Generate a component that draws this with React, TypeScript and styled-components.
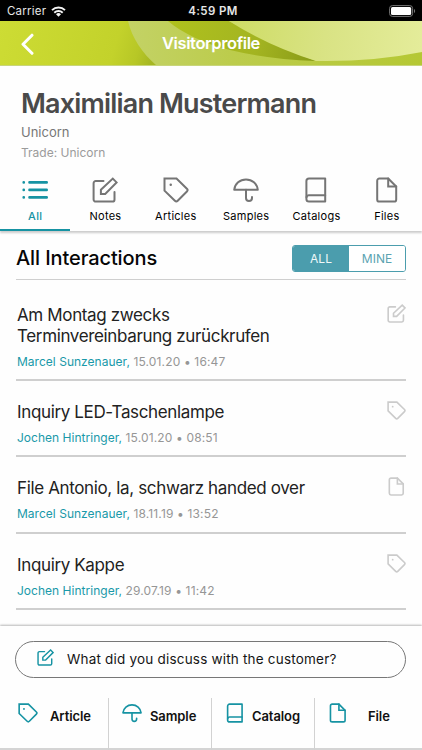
import React from "react";
import styled, { createGlobalStyle } from "styled-components";

const teal = "#1693a3";

const GlobalStyle = createGlobalStyle`
  *, *::before, *::after { box-sizing: border-box; }
  body {
    margin: 0;
    background: #fff;
    font-family: Inter, "Liberation Sans", sans-serif;
    color: #111;
  }
  button { font: inherit; color: inherit; background: none; border: 0; padding: 0; }
  h1, h2, h3, p { margin: 0; }
`;

const Screen = styled.div`
  width: 422px;
  height: 750px;
  display: flex;
  flex-direction: column;
  overflow: hidden;
  background: #fefefe;
`;

const StatusBar = styled.div`
  height: 21px;
  flex: none;
  display: grid;
  grid-template-columns: 1fr auto 1fr;
  align-items: center;
  padding: 1px 6px 0 7px;
  background: #000;
  color: #e6e6e6;
  font-size: 11.5px;
  letter-spacing: 0.22px;
`;

const Carrier = styled.div`
  display: flex;
  align-items: center;
  gap: 5px;
`;

const Clock = styled.div`
  padding-left: 3px;
  font-weight: 600;
  letter-spacing: 0.4px;
`;

const Battery = styled.svg`
  justify-self: end;
  display: block;
`;

const Header = styled.header`
  position: relative;
  height: 45px;
  flex: none;
  display: grid;
  grid-template-columns: 60px 1fr 60px;
  align-items: center;
  background: #c5d52c;
`;

const HeaderArt = styled.svg`
  position: absolute;
  inset: 0;
  width: 100%;
  height: 100%;
`;

const BackButton = styled.button`
  position: relative;
  height: 22px;
  padding-left: 20px;
  text-align: left;
  svg { display: block; }
`;

const HeaderTitle = styled.div`
  position: relative;
  padding-bottom: 1px;
  text-align: center;
  color: #fff;
  font-size: 16.5px;
  font-weight: 600;
  letter-spacing: -0.4px;
`;

const Profile = styled.section`
  height: 105px;
  flex: none;
  padding: 21px 21px 0;
`;

const Name = styled.h1`
  font-size: 27px;
  line-height: 34px;
  font-weight: 600;
  letter-spacing: -0.83px;
  color: #4a4a4a;
  white-space: nowrap;
`;

const Company = styled.p`
  margin-top: 2px;
  font-size: 13px;
  line-height: 18px;
  color: #777;
`;

const Trade = styled.p`
  margin-top: 3px;
  font-size: 12px;
  line-height: 18px;
  color: #9b9b9b;
`;

const Tabs = styled.nav`
  height: 60px;
  flex: none;
  display: grid;
  grid-template-columns: repeat(6, 1fr);
  box-shadow: 0 2px 2px rgba(0, 0, 0, 0.2);
`;

const Tab = styled.button<{ $active?: boolean }>`
  display: flex;
  flex-direction: column;
  align-items: center;
  padding-top: 6px;
  border-bottom: 2px solid ${(p) => (p.$active ? teal : "transparent")};
  color: ${(p) => (p.$active ? teal : "#757575")};
`;

const TabLabel = styled.span<{ $active?: boolean }>`
  margin-top: 5px;
  font-size: 11px;
  line-height: 16px;
  font-weight: ${(p) => (p.$active ? 500 : 400)};
  letter-spacing: 0.26px;
  color: ${(p) => (p.$active ? teal : "#000")};
`;

const Feed = styled.main`
  flex: 1;
  min-height: 0;
  padding: 0 16px;
`;

const FeedHeader = styled.div`
  height: 49px;
  display: flex;
  align-items: center;
  justify-content: space-between;
  padding-top: 6px;
  border-bottom: 1px solid #cfcfcf;
`;

const FeedTitle = styled.h2`
  font-size: 20px;
  line-height: 26px;
  font-weight: 500;
  letter-spacing: -0.1px;
  color: #060606;
`;

const Segments = styled.div`
  width: 114px;
  height: 27px;
  display: grid;
  grid-template-columns: 1fr 1fr;
  border: 1px solid #4b9dad;
  border-radius: 3px;
  overflow: hidden;
`;

const Segment = styled.button<{ $on?: boolean }>`
  font-size: 12px;
  background: ${(p) => (p.$on ? "#4b9dad" : "#fff")};
  color: ${(p) => (p.$on ? "#f1f8f9" : "#5ba3b1")};
`;

const Entry = styled.article<{ $height: number; $top: number }>`
  height: ${(p) => p.$height}px;
  display: flex;
  justify-content: space-between;
  padding: ${(p) => p.$top}px 0.5px 0 1px;
  border-bottom: 2px solid #cfcfcf;
`;

const EntryTitle = styled.h3`
  font-size: 17px;
  line-height: 21px;
  font-weight: 400;
  letter-spacing: -0.36px;
  color: #222;
  white-space: pre-line;
`;

const EntryMeta = styled.p`
  margin-top: 7px;
  font-size: 12px;
  line-height: 16px;
  letter-spacing: 0.15px;
  color: #969696;
`;

const Author = styled.span`
  letter-spacing: 0.02px;
  color: #1999a9;
`;

const EntryIcon = styled.div`
  margin-top: -1px;
  color: #cbcbcb;
`;

const Composer = styled.footer`
  height: 124px;
  flex: none;
  padding: 15px 0 0;
  border-bottom: 2px solid #d4d4d4;
  box-shadow: 0 -1px 2px rgba(0, 0, 0, 0.28);
`;

const NoteInput = styled.button`
  width: 391px;
  height: 37px;
  margin: 0 15px;
  display: flex;
  align-items: center;
  gap: 13px;
  padding: 0 0 1px 21px;
  border: 1px solid #777;
  border-radius: 19px;
  color: ${teal};
  svg { margin-bottom: 3px; }
`;

const NotePrompt = styled.span`
  font-size: 13.5px;
  letter-spacing: 0.2px;
  color: #151515;
`;

const Actions = styled.div`
  height: 52px;
  margin-top: 20px;
  display: grid;
  grid-template-columns: 108px 103px 103px 108px;
`;

const Action = styled.button<{ $pad: number; $gap: number }>`
  display: flex;
  align-items: flex-start;
  gap: ${(p) => p.$gap}px;
  padding: 5px 0 0 ${(p) => p.$pad}px;
  color: ${teal};
  & + & { border-left: 1px solid #d2d2d2; }
`;

const ActionLabel = styled.span`
  margin-top: 4px;
  font-size: 13px;
  line-height: 18px;
  font-weight: 600;
  letter-spacing: -0.1px;
  color: #111;
`;

const Glyph = styled.svg`
  display: block;
  flex: none;
  fill: none;
  stroke: currentColor;
  stroke-linecap: round;
  stroke-linejoin: round;
`;

type IconName = "list" | "note" | "tag" | "umbrella" | "book" | "file";

const shapes: Record<IconName, React.ReactNode> = {
  list: (
    <>
      <path d="M7.5 5.4h17.2M7.5 12.9h17.2M7.5 20.4h17.2" strokeWidth="2.6" />
      <path d="M1.7 5.4h.1M1.7 12.9h.1M1.7 20.4h.1" strokeWidth="2.6" />
    </>
  ),
  note: (
    <>
      <path d="M11.5 4H3.8a2.2 2.2 0 0 0-2.2 2.2v16.2a2.2 2.2 0 0 0 2.2 2.2h16.5a2.2 2.2 0 0 0 2.2-2.2v-7.3" />
      <path d="M20.8 1.6 24.6 5.4 13.2 17H8.9v-4.3Z" strokeLinejoin="miter" />
    </>
  ),
  tag: (
    <>
      <path d="M1.5 1.5h12l10.4 10.2q1.4 1.4 0 2.8l-9.2 9.2q-1.4 1.4-2.8 0L1.5 13.6Z" strokeLinejoin="miter" />
      <path d="M7.7 7.7h.1" strokeWidth="2.4" />
    </>
  ),
  umbrella: (
    <>
      <path d="M1.2 12.8C1.8 6.5 7 2.4 13 2.4s11.2 4.1 11.8 10.4Z" />
      <path d="M13 12.8v8.1a3 3 0 0 0 6 0v-1" />
    </>
  ),
  book: (
    <>
      <path d="M6 1.5h16.2v23.1H6A2.6 2.6 0 0 1 3.4 22V4.1A2.6 2.6 0 0 1 6 1.5Z" />
      <path d="M3.5 20.2a2.5 2.5 0 0 1 2.5-2h16.2" />
    </>
  ),
  file: (
    <>
      <path d="M14.2 1.5H5.4A2.2 2.2 0 0 0 3.2 3.7v18.7a2.2 2.2 0 0 0 2.2 2.2H20a2.2 2.2 0 0 0 2.2-2.2V9.5Z" />
      <path d="M14.2 1.5v8h8" strokeLinejoin="miter" />
    </>
  ),
};

function Icon({ name, size = 26, weight = 2 }: { name: IconName; size?: number; weight?: number }) {
  return (
    <Glyph width={size} height={size} viewBox="0 0 26 26" strokeWidth={weight}>
      {shapes[name]}
    </Glyph>
  );
}

const tabs: { icon: IconName; label: string }[] = [
  { icon: "list", label: "All" },
  { icon: "note", label: "Notes" },
  { icon: "tag", label: "Articles" },
  { icon: "umbrella", label: "Samples" },
  { icon: "book", label: "Catalogs" },
  { icon: "file", label: "Files" },
];

const entries: { title: string; author: string; when: string; icon: IconName; height: number; top: number }[] = [
  { title: "Am Montag zwecks\nTerminvereinbarung zurückrufen", author: "Marcel Sunzenauer,", when: "15.01.20 • 16:47", icon: "note", height: 101, top: 25 },
  { title: "Inquiry LED-Taschenlampe", author: "Jochen Hintringer,", when: "15.01.20 • 08:51", icon: "tag", height: 76, top: 21 },
  { title: "File Antonio, la, schwarz handed over", author: "Marcel Sunzenauer,", when: "18.11.19 • 13:52", icon: "file", height: 77, top: 21 },
  { title: "Inquiry Kappe", author: "Jochen Hintringer,", when: "29.07.19 • 11:42", icon: "tag", height: 76, top: 21 },
];

const actions: { icon: IconName; label: string; pad: number; gap: number }[] = [
  { icon: "tag", label: "Article", pad: 18, gap: 12 },
  { icon: "umbrella", label: "Sample", pad: 13, gap: 8 },
  { icon: "book", label: "Catalog", pad: 13, gap: 7 },
  { icon: "file", label: "File", pad: 13, gap: 20 },
];

export default function App() {
  return (
    <>
      <GlobalStyle />
      <Screen>
        <StatusBar>
          <Carrier>
            Carrier
            <svg width="15" height="11" viewBox="0 0 15 11" fill="none" stroke="#f4f4f4" strokeWidth="1.9">
              <path d="M1 4.2a9.2 9.2 0 0 1 13 0M3.3 6.7a6 6 0 0 1 8.4 0" />
              <path d="M7.5 10.7 5 8.3a3.6 3.6 0 0 1 5 0Z" fill="#f4f4f4" stroke="none" />
            </svg>
          </Carrier>
          <Clock>4:59 PM</Clock>
          <Battery width="27" height="12" viewBox="0 0 27 12">
            <rect x="0.6" y="0.6" width="23" height="10.8" rx="2.8" fill="none" stroke="#777" />
            <rect x="2" y="2" width="20.2" height="8" rx="1.5" fill="#fff" />
            <path d="M25 4v4c1.5-.5 1.5-3.5 0-4Z" fill="#777" />
          </Battery>
        </StatusBar>

        <Header>
          <HeaderArt viewBox="0 0 422 45" preserveAspectRatio="none">
            <defs>
              <linearGradient id="base" x1="0" y1="0" x2="150" y2="45" gradientUnits="userSpaceOnUse">
                <stop offset="0" stopColor="#cddc34" />
                <stop offset="0.75" stopColor="#c3d22b" />
                <stop offset="0.9" stopColor="#b7c726" />
                <stop offset="1" stopColor="#a6b722" />
              </linearGradient>
              <linearGradient id="band" x1="130" y1="0" x2="422" y2="0" gradientUnits="userSpaceOnUse">
                <stop offset="0" stopColor="#c3d265" />
                <stop offset="0.35" stopColor="#bccc4c" />
                <stop offset="1" stopColor="#b5c834" />
              </linearGradient>
              <linearGradient id="leaf" x1="170" y1="0" x2="315" y2="40" gradientUnits="userSpaceOnUse">
                <stop offset="0" stopColor="#afc11d" />
                <stop offset="0.6" stopColor="#a3b421" />
                <stop offset="1" stopColor="#899b17" />
              </linearGradient>
              <linearGradient id="light" x1="230" y1="0" x2="422" y2="20" gradientUnits="userSpaceOnUse">
                <stop offset="0" stopColor="#cedc65" />
                <stop offset="0.5" stopColor="#d9e384" />
                <stop offset="1" stopColor="#e4ec9a" />
              </linearGradient>
            </defs>
            <path d="M0 0h422v45H0Z" fill="url(#base)" />
            <path d="M128 0C132 17 142 32 157 45H422V0Z" fill="url(#band)" />
            <path d="M168 0C182 12 205 23 230 29Q267 38 316 40Q268 22 229 0Z" fill="url(#leaf)" />
            <path d="M229 0Q268 25 316 40Q372 41 422 31V0Z" fill="url(#light)" />
            <path d="M0 44h422v1H0Z" fill="#c8d57b" />
          </HeaderArt>
          <BackButton aria-label="Back">
            <svg width="16" height="22" viewBox="0 0 16 22" fill="none" stroke="#fff" strokeWidth="3" strokeLinecap="round" strokeLinejoin="round">
              <path d="M12 2.2 3 11.3l9 9" />
            </svg>
          </BackButton>
          <HeaderTitle>Visitorprofile</HeaderTitle>
        </Header>

        <Profile>
          <Name>Maximilian Mustermann</Name>
          <Company>Unicorn</Company>
          <Trade>Trade: Unicorn</Trade>
        </Profile>

        <Tabs>
          {tabs.map((tab, i) => (
            <Tab key={tab.label} $active={i === 0}>
              <Icon name={tab.icon} />
              <TabLabel $active={i === 0}>{tab.label}</TabLabel>
            </Tab>
          ))}
        </Tabs>

        <Feed>
          <FeedHeader>
            <FeedTitle>All Interactions</FeedTitle>
            <Segments>
              <Segment $on>ALL</Segment>
              <Segment>MINE</Segment>
            </Segments>
          </FeedHeader>
          {entries.map((entry) => (
            <Entry key={entry.title} $height={entry.height} $top={entry.top}>
              <div>
                <EntryTitle>{entry.title}</EntryTitle>
                <EntryMeta>
                  <Author>{entry.author}</Author> {entry.when}
                </EntryMeta>
              </div>
              <EntryIcon>
                <Icon name={entry.icon} size={19} weight={2.2} />
              </EntryIcon>
            </Entry>
          ))}
        </Feed>

        <Composer>
          <NoteInput>
            <Icon name="note" size={17} weight={2.2} />
            <NotePrompt>What did you discuss with the customer?</NotePrompt>
          </NoteInput>
          <Actions>
            {actions.map((action) => (
              <Action key={action.label} $pad={action.pad} $gap={action.gap}>
                <Icon name={action.icon} size={20} weight={2.1} />
                <ActionLabel>{action.label}</ActionLabel>
              </Action>
            ))}
          </Actions>
        </Composer>
      </Screen>
    </>
  );
}
